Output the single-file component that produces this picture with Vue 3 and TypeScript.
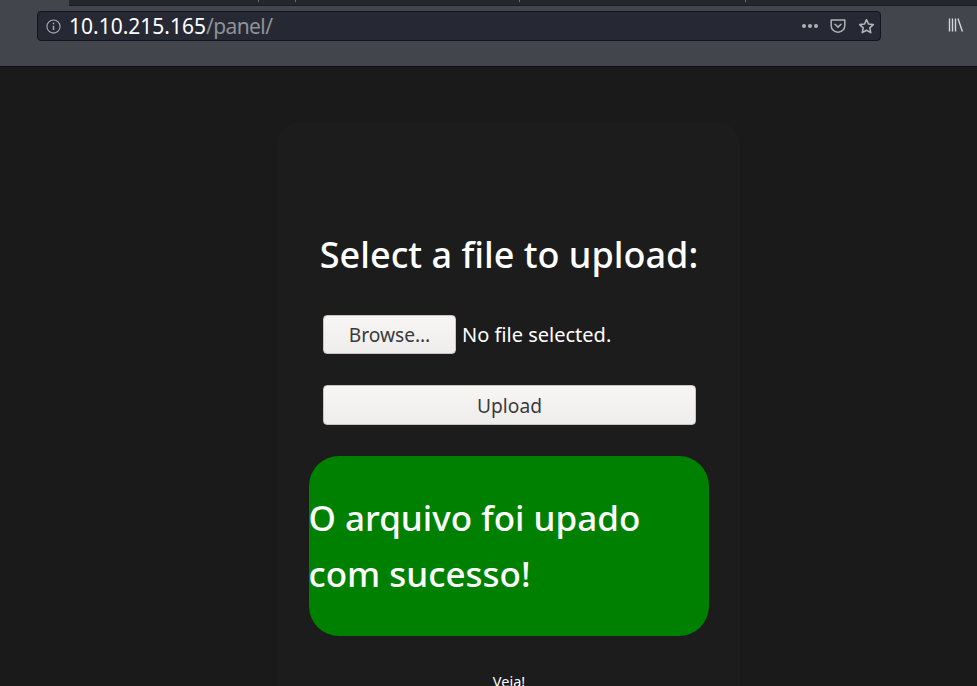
<script setup lang="ts">
const host = '10.10.215.165'
const path = '/panel/'
</script>

<template>
  <div class="page">
    <header class="toolbar">
      <div class="tabstrip">
        <span class="tick t1"></span><span class="tick t2"></span><span class="tick t3"></span><span class="tick t4"></span>
      </div>
      <div class="navrow">
        <div class="urlbar">
          <svg class="info" viewBox="0 0 16 16" width="15" height="15" fill="none" stroke="#a9abb0" stroke-width="1.2">
            <circle cx="8" cy="8" r="7" />
            <path d="M8 7.2v4.4M8 4v1.7" stroke-width="1.6" />
          </svg>
          <span class="url"><span class="host">{{ host }}</span><span class="path">{{ path }}</span></span>
          <span class="dots"><i></i><i></i><i></i></span>
          <svg class="pocket" viewBox="0 0 16 16" width="16" height="16" fill="none" stroke="#b1b2b6" stroke-width="1.5">
            <path d="M1.2 2h13.6v5.8a6.8 6.4 0 0 1-13.6 0z" stroke-linejoin="round" />
            <path d="M5 6.3l3 2.8 3-2.8" stroke-linecap="round" />
          </svg>
          <svg class="star" viewBox="0 0 16 16" width="17" height="17" fill="none" stroke="#b1b2b6" stroke-width="1.5" stroke-linejoin="round">
            <path d="M8 1.6l1.9 4.1 4.5.5-3.3 3.1.9 4.5L8 11.5l-4 2.3.9-4.5-3.3-3.1 4.5-.5z" />
          </svg>
        </div>
        <svg class="library" viewBox="0 0 16 16" width="16" height="16" fill="none" stroke="#d5d6d8" stroke-width="1.4">
          <path d="M1.5 1.5v13M4.5 1.5v13M7.5 1.5v13M10 1.6l4.4 12.8" />
        </svg>
      </div>
    </header>

    <main class="content">
      <section class="card">
        <h1 class="title">Select a file to upload:</h1>
        <form class="form" @submit.prevent>
          <div class="filerow">
            <button type="button" class="btn browse">Browse…</button>
            <span class="nofile">No file selected.</span>
          </div>
          <button type="submit" class="btn upload">Upload</button>
        </form>
        <div class="success">O arquivo foi upado com sucesso!</div>
        <a class="see">Veja!</a>
      </section>
    </main>
  </div>
</template>

<style>
html, body { margin: 0; background: #1a1a1a; }
</style>

<style scoped>
.page {
  width: 977px;
  height: 686px;
  overflow: hidden;
  background: #1a1a1a;
  display: flex;
  flex-direction: column;
  font-family: "Noto Sans", "Open Sans", sans-serif;
}
.toolbar {
  height: 66px;
  flex: none;
  background: #42454c;
  border-bottom: 1px solid #0f0f12;
  display: flex;
  flex-direction: column;
}
.tabstrip {
  height: 5px;
  margin-left: 69px;
  background: #25272f;
  border-bottom: 1px solid #1b1c22;
  position: relative;
  flex: none;
}
.tick { position: absolute; top: 0; width: 1px; height: 2px; background: #6a6c74; }
.t1 { left: 189px; }
.t2 { left: 226px; }
.t3 { left: 450px; }
.t4 { left: 676px; }
.navrow {
  display: flex;
  align-items: flex-start;
  padding: 5px 0 0 37px;
}
.urlbar {
  width: 844px;
  height: 30px;
  box-sizing: border-box;
  background: #262934;
  border: 1px solid #14151a;
  border-radius: 4px;
  display: flex;
  align-items: center;
  padding: 0 5px 0 8px;
}
.info { flex: none; }
.url { margin-left: 8px; font-size: 21px; flex: 1; line-height: 28px; }
.host { color: #fff; }
.path { color: #8f9196; letter-spacing: -0.6px; }
.dots { display: flex; gap: 2px; margin-right: 12px; }
.dots i { width: 4px; height: 4px; border-radius: 50%; background: #b1b2b6; }
.pocket { margin-right: 12px; }
.library { margin: 6px 0 0 67px; }

.content { flex: 1; display: flex; padding: 55px 0 0 277px; min-height: 0; }
.card {
  width: 463px;
  height: 620px;
  box-sizing: border-box;
  background: #1c1c1c;
  border-radius: 22px;
  padding-top: 110px;
  display: flex;
  flex-direction: column;
  align-items: center;
}
.title {
  margin: 0 0 0 1px;
  font-size: 36px;
  font-weight: 500;
  line-height: 46px;
  color: #fff;
}
.form { width: 373px; margin: 37px 0 0 2px; display: flex; flex-direction: column; }
.filerow { display: flex; align-items: center; }
.btn {
  font-family: inherit;
  font-size: 19.2px;
  color: #3a3a3c;
  background: linear-gradient(#f7f6f5, #eeedec);
  border: 1px solid #c9c6c2;
  border-radius: 4px;
  padding: 0;
}
.browse { width: 133px; height: 39px; }
.nofile { margin-left: 6px; font-size: 20px; color: #fff; }
.upload { width: 373px; height: 40px; margin-top: 31px; }
.success {
  width: 400px;
  height: 180px;
  margin-top: 31px;
  background: #008000;
  border-radius: 30px;
  color: #fff;
  font-size: 35px;
  font-weight: 500;
  line-height: 56px;
  padding-top: 34px;
  box-sizing: border-box;
}
.see { margin: 35px 0 0 1px; font-size: 14.5px; color: #fff; line-height: 20px; }
</style>
